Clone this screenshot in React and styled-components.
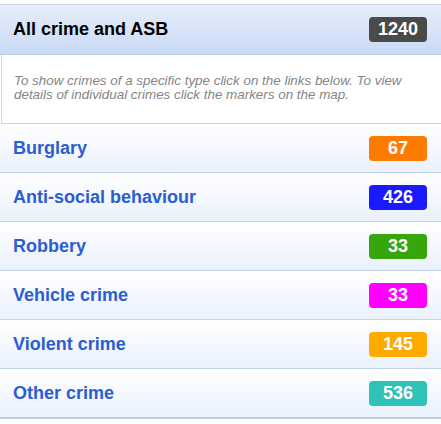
import React from 'react'
import styled, { createGlobalStyle } from 'styled-components'

const GlobalStyle = createGlobalStyle`
  body {
    margin: 0;
    background: #ffffff;
    font-family: "Liberation Sans", Arial, sans-serif;
  }
`;

const crimes = [
  { name: 'Burglary', count: 67, color: '#ff7b00' },
  { name: 'Anti-social behaviour', count: 426, color: '#1a1aff' },
  { name: 'Robbery', count: 33, color: '#36a60c' },
  { name: 'Vehicle crime', count: 33, color: '#ff00ff' },
  { name: 'Violent crime', count: 145, color: '#ffaa00' },
  { name: 'Other crime', count: 536, color: '#2ec2b8' },
];

function App() {
  return (
    <>
      <GlobalStyle />
      <Panel>
        <Header>
          <HeaderTitle>All crime and ASB</HeaderTitle>
          <Badge $color="#4a4a4a">1240</Badge>
        </Header>
        <Intro>
          To show crimes of a specific type click on the links below. To view
          details of individual crimes click the markers on the map.
        </Intro>
        <List>
          {crimes.map(c => (
            <Row key={c.name}>
              <CrimeLink href="#">{c.name}</CrimeLink>
              <Badge $color={c.color}>{c.count}</Badge>
            </Row>
          ))}
        </List>
      </Panel>
    </>
  )
}

const Panel = styled.div`
  margin-top: 4px;
  border-top: 1px solid #c3d5ec;
`;

const Header = styled.div`
  height: 50px;
  box-sizing: border-box;
  display: flex;
  align-items: center;
  justify-content: space-between;
  padding: 0 14px 0 13px;
  background: linear-gradient(to bottom, #e7eefb, #c9daf6);
  border-bottom: 1px solid #bccfe8;
`;

const HeaderTitle = styled.div`
  font-size: 18px;
  font-weight: bold;
  color: #000;
`;

const Badge = styled.span`
  display: flex;
  align-items: center;
  justify-content: center;
  width: 58px;
  height: 25px;
  border-radius: 4px;
  background: ${p => p.$color};
  color: #fff;
  font-size: 18px;
  font-weight: bold;
`;

const Intro = styled.p`
  margin: 0 0 0 1px;
  height: 69px;
  box-sizing: border-box;
  padding: 19px 13px 0 12px;
  border-left: 1px solid #c9d9ee;
  border-bottom: 1px solid #c3d5ec;
  font-size: 13.4px;
  line-height: 14px;
  font-style: italic;
  color: #858585;
  background: #fff;
`;

const List = styled.div`
  display: flex;
  flex-direction: column;
`;

const Row = styled.div`
  height: 49px;
  box-sizing: border-box;
  display: flex;
  align-items: center;
  justify-content: space-between;
  padding: 0 14px 0 13px;
  background: linear-gradient(to bottom, #ffffff, #eaf1fc);
  border-bottom: 1px solid #c3d5ea;

  &:last-child {
    height: 50px;
    border-bottom: 2px solid #bcd2df;
  }
`;

const CrimeLink = styled.a`
  font-size: 18px;
  font-weight: bold;
  color: #2b5dd3;
  text-decoration: none;
`;

export default App
